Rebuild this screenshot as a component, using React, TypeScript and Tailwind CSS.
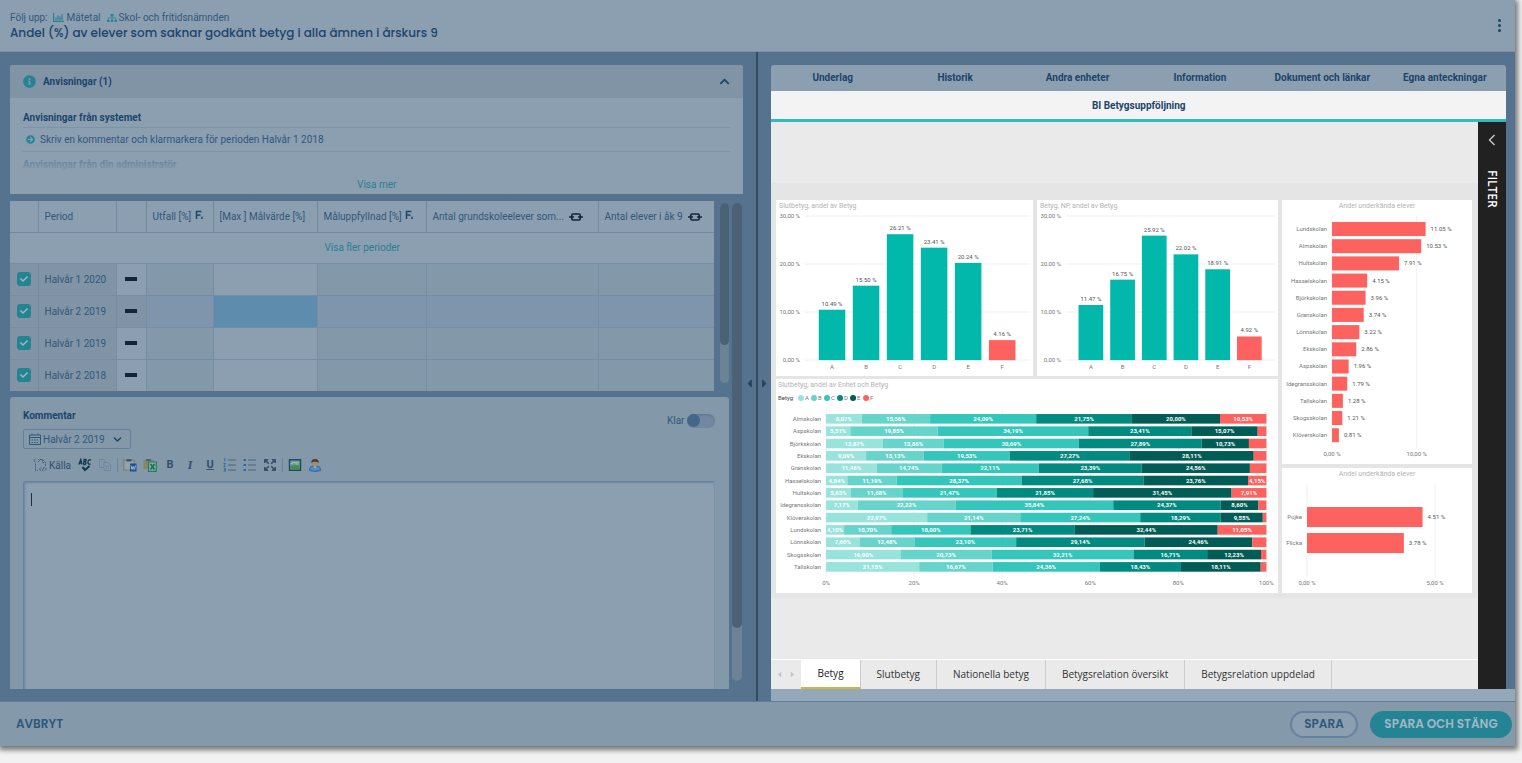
import { ReactNode } from "react";
import {
  FaCheck,
  FaChevronDown,
  FaChevronUp,
  FaInfoCircle,
  FaArrowCircleRight,
  FaSitemap,
  FaCaretLeft,
  FaCaretRight,
} from "react-icons/fa";

const TEAL = "#01b8aa";
const RED = "#fd625e";
const GRADE_COLORS = ["#99e3dd", "#67d4cc", "#34c6bb", "#018a80", "#015c55", RED];
const GRADES = ["A", "B", "C", "D", "E", "F"];

const FINAL_GRADES = [10.49, 15.5, 26.21, 23.41, 20.24, 4.16];
const TEST_GRADES = [11.47, 16.75, 25.92, 22.02, 18.91, 4.92];

interface NamedValue {
  name: string;
  value: number;
}

const FAILED_BY_SCHOOL: NamedValue[] = [
  { name: "Lundskolan", value: 11.05 },
  { name: "Almskolan", value: 10.53 },
  { name: "Hultskolan", value: 7.91 },
  { name: "Hasselskolan", value: 4.15 },
  { name: "Björkskolan", value: 3.96 },
  { name: "Granskolan", value: 3.74 },
  { name: "Lönnskolan", value: 3.22 },
  { name: "Ekskolan", value: 2.86 },
  { name: "Aspskolan", value: 1.96 },
  { name: "Idegransskolan", value: 1.79 },
  { name: "Tallskolan", value: 1.28 },
  { name: "Skogsskolan", value: 1.21 },
  { name: "Klöverskolan", value: 0.81 },
];

const FAILED_BY_GENDER: NamedValue[] = [
  { name: "Pojke", value: 4.51 },
  { name: "Flicka", value: 3.78 },
];

const GRADES_BY_SCHOOL = [
  { name: "Almskolan", values: [8.07, 15.56, 24.09, 21.75, 20.0, 10.53] },
  { name: "Aspskolan", values: [5.51, 19.85, 34.19, 23.41, 15.07, 1.97] },
  { name: "Björkskolan", values: [12.87, 13.86, 30.69, 27.89, 10.73, 3.96] },
  { name: "Ekskolan", values: [9.09, 13.13, 19.53, 27.27, 28.11, 2.87] },
  { name: "Granskolan", values: [11.46, 14.74, 22.11, 23.39, 24.56, 3.74] },
  { name: "Hasselskolan", values: [4.84, 11.19, 28.37, 27.68, 23.76, 4.15] },
  { name: "Hultskolan", values: [5.65, 11.68, 21.47, 21.85, 31.45, 7.91] },
  { name: "Idegransskolan", values: [7.17, 22.22, 35.84, 24.37, 8.6, 1.79] },
  { name: "Klöverskolan", values: [22.97, 21.14, 27.24, 18.29, 9.55, 0.81] },
  { name: "Lundskolan", values: [4.1, 10.7, 18.0, 23.71, 32.44, 11.05] },
  { name: "Lönnskolan", values: [7.6, 12.48, 23.1, 29.14, 24.46, 3.22] },
  { name: "Skogsskolan", values: [16.9, 20.73, 32.21, 16.71, 12.23, 1.21] },
  { name: "Tallskolan", values: [21.15, 16.67, 24.36, 18.43, 18.11, 1.28] },
];

const comma = (n: number) => n.toFixed(2).replace(".", ",");

interface ChartFrameProps {
  width: number;
  height: number;
  label: string;
  children: ReactNode;
}
function ChartFrame({ width, height, label, children }: ChartFrameProps) {
  return (
    <svg
      viewBox={`0 0 ${width} ${height}`}
      role="img"
      aria-label={label}
      className="block w-full bg-white font-['Roboto',sans-serif] text-[6px]"
      fill="#777777"
    >
      {children}
    </svg>
  );
}

interface ColumnChartProps {
  title: string;
  values: number[];
  width: number;
  bandStart: number;
  bandEnd: number;
}
function ColumnChart({ title, values, width, bandStart, bandEnd }: ColumnChartProps) {
  const base = 160;
  const scale = 4.8;
  const step = (bandEnd - bandStart) / values.length;
  return (
    <ChartFrame width={width} height={176} label={title}>
      <text x={3} y={8} fontSize={7} fill="#b3b3b3">
        {title}
      </text>
      {[0, 10, 20, 30].map((tick) => (
        <g key={tick}>
          <line x1={29} x2={width - 2} y1={base - tick * scale} y2={base - tick * scale} stroke="#efefef" />
          <text x={24} y={base + 2 - tick * scale} textAnchor="end">
            {comma(tick)} %
          </text>
        </g>
      ))}
      {values.map((value, i) => {
        const center = bandStart + step * (i + 0.5);
        return (
          <g key={GRADES[i]} textAnchor="middle">
            <rect
              x={center - step * 0.39}
              y={base - value * scale}
              width={step * 0.78}
              height={value * scale}
              fill={GRADES[i] === "F" ? RED : TEAL}
            />
            <text x={center} y={base - 4 - value * scale} fill="#555555">
              {value.toFixed(2)} %
            </text>
            <text x={center} y={base + 9}>
              {GRADES[i]}
            </text>
          </g>
        );
      })}
    </ChartFrame>
  );
}

interface BarChartProps {
  title: string;
  rows: NamedValue[];
  height: number;
  left: number;
  top: number;
  step: number;
  barHeight: number;
  scale: number;
  maxTick: number;
}
function BarChart({ title, rows, height, left, top, step, barHeight, scale, maxTick }: BarChartProps) {
  return (
    <ChartFrame width={190} height={height} label={title}>
      <text x={95} y={8} fontSize={7} fill="#b3b3b3" textAnchor="middle">
        {title}
      </text>
      {[0, maxTick].map((tick) => (
        <g key={tick}>
          <line x1={left + tick * scale} x2={left + tick * scale} y1={16} y2={height - 16} stroke="#efefef" />
          <text x={left + tick * scale} y={height - 8} textAnchor="middle">
            {comma(tick)} %
          </text>
        </g>
      ))}
      {rows.map((row, i) => {
        const y = top + i * step;
        const middle = y + barHeight / 2 + 2;
        return (
          <g key={row.name}>
            <text x={left - 5} y={middle} textAnchor="end">
              {row.name}
            </text>
            <rect x={left} y={y} width={row.value * scale} height={barHeight} fill={RED} />
            <text x={left + row.value * scale + 5} y={middle} fill="#555555">
              {row.value.toFixed(2)} %
            </text>
          </g>
        );
      })}
    </ChartFrame>
  );
}

function StackedChart() {
  const left = 50;
  const scale = 4.4;
  const top = 35;
  const step = 12.33;
  return (
    <ChartFrame width={501} height={214} label="Slutbetyg, andel av Enhet och Betyg">
      <text x={2} y={8} fontSize={7} fill="#b3b3b3">
        Slutbetyg, andel av Enhet och Betyg
      </text>
      <text x={2} y={21} fill="#444444">
        Betyg
      </text>
      {GRADES.map((grade, i) => (
        <g key={grade}>
          <circle cx={25 + i * 13} cy={19} r={3} fill={GRADE_COLORS[i]} />
          <text x={29 + i * 13} y={21}>
            {grade}
          </text>
        </g>
      ))}
      {[0, 20, 40, 60, 80, 100].map((tick) => (
        <g key={tick}>
          <line x1={left + tick * scale} x2={left + tick * scale} y1={30} y2={198} stroke="#efefef" />
          <text x={left + tick * scale} y={206} textAnchor="middle">
            {tick}%
          </text>
        </g>
      ))}
      {GRADES_BY_SCHOOL.map((school, row) => {
        const y = top + row * step;
        let sum = 0;
        return (
          <g key={school.name}>
            <text x={left - 5} y={y + 7} textAnchor="end">
              {school.name}
            </text>
            {school.values.map((value, i) => {
              const x = left + sum * scale;
              sum += value;
              return (
                <g key={GRADES[i]}>
                  <rect x={x} y={y} width={value * scale} height={9.6} fill={GRADE_COLORS[i]} />
                  {value >= 4 && (
                    <text x={x + (value * scale) / 2} y={y + 7} fill="#ffffff" fontWeight={700} textAnchor="middle">
                      {comma(value)}%
                    </text>
                  )}
                </g>
              );
            })}
          </g>
        );
      })}
    </ChartFrame>
  );
}

function MeasureIcon() {
  return (
    <svg viewBox="0 0 11 9" className="mr-[3px] ml-[5px] h-[9px] w-[11px]" fill="none" stroke="#248494">
      <path d="M.6 0V8.4H11" strokeWidth="1.2" />
      <path d="M3 7.200V4.500M5 7.200V2.500M7 7.200V3.500M9 7.200V1" strokeWidth="1.2" />
    </svg>
  );
}

function FunctionIcon() {
  return (
    <svg viewBox="0 0 9 10" className="mb-1 ml-px inline-block h-[10px] w-[9px]" fill="none" stroke="#1f4668">
      <path d="M1.5 9V1.5H6.5M1.5 5H5.5" strokeWidth="1.5" />
      <path d="M6 6.5L8 9M8 6.5L6 9" strokeWidth="0.8" />
    </svg>
  );
}

function LinkIcon() {
  return (
    <svg viewBox="0 0 14 10" className="ml-[3px] inline-block h-[10px] w-[14px]" fill="none" stroke="#10273b" strokeWidth="1.6">
      <path d="M5.5 2H4Q2.8 2 2.8 3.2V6.8Q2.8 8 4 8H5.5M8.5 2H10Q11.2 2 11.2 3.2V6.8Q11.2 8 10 8H8.5M5 2H9M5 8H9" />
      <path d="M0 5H5M9 5H14" />
    </svg>
  );
}

function SourceIcon() {
  return (
    <svg viewBox="0 0 14 14" className="size-[14px]" fill="none" stroke="#43607b">
      <path d="M2.5 1L.8 2.5L2.5 4M5 1L6.7 2.5L5 4" />
      <path d="M7 1.5H9.5L12.5 4.5V8M9.5 1.5V4.5H12.5M2.5 5.5V12.5H5" strokeDasharray="2 .8" />
      <path d="M8 9.5L6.3 11L8 12.5M12 9.5L13.5 11L12 12.5M10.7 9L9.4 13" />
    </svg>
  );
}

function SpellIcon() {
  return (
    <svg viewBox="0 0 14 14" className="size-[14px]" fill="none" stroke="#0f3a4c">
      <path d="M.8 6.5L2.8 1.5L4 6.5M1.5 5H4M5.5 6.5L6.2 1.5H7.8Q9 2.5 7 3.8Q9 5 7 6.5H5.5M13 2.2Q10.2.8 10 4Q9.9 7 12.6 6" strokeWidth="1.3" />
      <path d="M4.5 9L7 12L11.5 8" strokeWidth="2" />
    </svg>
  );
}

function CopyIcon() {
  return (
    <svg viewBox="0 0 14 14" className="size-[14px]" fill="#8399ab" stroke="#6e869b">
      <path d="M1.5 1.5H5.5L8 4V9.5H1.5Z" />
      <path d="M6 4.5H10L12.5 7V12.5H6ZM7.5 8H11M7.5 10H11" />
    </svg>
  );
}

function PasteWordIcon() {
  return (
    <svg viewBox="0 0 14 14" className="size-[14px]">
      <path d="M.8 2.2H11.2V12.2H.8Z" fill="#8fa4b6" stroke="#8b7f60" strokeWidth="1.3" />
      <path d="M3.5 3.5V1.2H8.5V3.5Z" fill="#37536c" />
      <path d="M7 5.5H13.5V13.5H7Z" fill="#1d5295" />
      <path d="M8 7.5L9 11.5L10.2 8.5L11.4 11.5L12.5 7.5" fill="none" stroke="#a9bccd" />
    </svg>
  );
}

function PasteExcelIcon() {
  return (
    <svg viewBox="0 0 14 14" className="size-[14px]">
      <path d="M.5 2H11V11H.5Z" fill="#8c8464" />
      <path d="M3 3V1H8V3Z" fill="#4c6478" />
      <path d="M5.5 4H13.3V13.3H5.5Z" fill="#8da8ae" stroke="#1f7f63" strokeWidth="1.2" />
      <path d="M7.5 6L11.5 11.5M11.5 6L7.5 11.5" stroke="#117a52" strokeWidth="1.7" />
    </svg>
  );
}

interface ListIconProps {
  numbered?: boolean;
}
function ListIcon({ numbered }: ListIconProps) {
  return (
    <svg viewBox="0 0 14 14" className="size-[14px]" fill="none">
      <path d="M5 2H13M5 7H13M5 12H13" stroke="#4a647d" />
      {numbered ? (
        <path d="M.8.8H1.8V3.5M.6 5.5H2.4L.8 8.2H2.5M.6 10H2.3V13.2H.6M1 11.6H2.2" stroke="#2f66a0" strokeWidth=".9" />
      ) : (
        <path d="M.5 2H3M.5 7H3M.5 12H3" stroke="#2f66a0" strokeWidth="2.2" />
      )}
    </svg>
  );
}

function MaximizeIcon() {
  return (
    <svg viewBox="0 0 14 14" className="size-[14px]" fill="#334f69" stroke="#334f69">
      <path d="M1.5 1.5H5L1.5 5ZM12.5 1.5V5L9 1.5ZM1.5 12.5V9L5 12.5ZM12.5 12.5H9L12.5 9Z" />
      <path d="M2 2L5.8 5.8M12 2L8.2 5.8M2 12L5.8 8.2M12 12L8.2 8.2" strokeWidth="1.6" />
    </svg>
  );
}

function ImageIcon() {
  return (
    <svg viewBox="0 0 14 14" className="size-[14px]">
      <path d="M1.5 1.8H12.5V12.2H1.5Z" fill="#5aa1b8" stroke="#204a5c" strokeWidth="1.4" />
      <path d="M2.2 11.5V8.5Q7 6 11.8 8V11.5Z" fill="#4c8a4d" />
      <path d="M2.5 6Q5 3.5 9 5" stroke="#b3c4c8" fill="none" />
      <circle cx="9" cy="5" r="1.6" fill="#c4a94c" />
    </svg>
  );
}

function UserIcon() {
  return (
    <svg viewBox="0 0 14 14" className="size-[14px]">
      <path d="M1.5 12.5Q1 8.5 4.5 8H9.5Q13 8.5 12.5 12.5Q7 14.5 1.5 12.5Z" fill="#4a90c8" stroke="#275c91" strokeWidth=".8" />
      <circle cx="7" cy="5" r="3.4" fill="#a68b72" />
      <path d="M3.3 5Q3 1 7 1Q11 1 10.7 5Q9 3.5 7 3.8Q5 3.5 3.3 5Z" fill="#4e3a35" />
      <path d="M5.5 8.5L7 10.5L8.5 8.5Z" fill="#a9bccb" />
    </svg>
  );
}

interface ToolProps {
  label: string;
  children: ReactNode;
}
function Tool({ label, children }: ToolProps) {
  return (
    <button type="button" aria-label={label} className="flex h-5 w-5 items-center justify-center text-[#334f69]">
      {children}
    </button>
  );
}

function PageHeader() {
  return (
    <header className="flex h-[52px] shrink-0 items-center justify-between border-b border-[#7990a5] bg-[#8b9fb1] px-[10px]">
      <div>
        <p className="flex items-center text-[10px] leading-[14px] text-[#31587b]">
          Följ upp:
          <MeasureIcon />
          Mätetal
          <FaSitemap className="mr-[2px] ml-[6px] text-[10px] text-[#248494]" />
          Skol- och fritidsnämnden
        </p>
        <h1 className="font-['Poppins','Inter',sans-serif] text-[12px] leading-4 font-medium text-[#1b456b]">
          Andel (%) av elever som saknar godkänt betyg i alla ämnen i årskurs 9
        </h1>
      </div>
      <button type="button" aria-label="Meny" className="flex w-3 flex-col items-center gap-[2px]">
        <span className="size-[3px] rounded-full bg-[#1b456b]" />
        <span className="size-[3px] rounded-full bg-[#1b456b]" />
        <span className="size-[3px] rounded-full bg-[#1b456b]" />
      </button>
    </header>
  );
}

function Instructions() {
  return (
    <section className="mr-[13px] rounded-[3px] bg-[#8b9fb1]">
      <div className="flex h-[33px] items-center rounded-t-[3px] bg-[#8094a6] px-[13px]">
        <FaInfoCircle className="text-[13px] text-[#248494]" />
        <h2 className="ml-[7px] flex-1 text-[10px] font-bold">Anvisningar (1)</h2>
        <button type="button" aria-label="Dölj anvisningar">
          <FaChevronUp className="text-[11px]" />
        </button>
      </div>
      <div className="relative h-24 px-[13px] pt-[13px]">
        <h3 className="border-b border-[#7d93a6] pb-[2px] text-[10px] leading-[14px] font-bold">
          Anvisningar från systemet
        </h3>
        <p className="flex h-6 items-center border-b border-[#7d93a6] pl-[3px] text-[10px] text-[#31587b]">
          <FaArrowCircleRight className="mr-[5px] text-[9px] text-[#248494]" />
          Skriv en kommentar och klarmarkera för perioden Halvår 1 2018
        </p>
        <h3 className="pt-[6px] text-[10px] leading-[14px] font-bold text-[#5c7a99]">Anvisningar från din administratör</h3>
        <div className="absolute inset-x-0 bottom-0 flex h-9 items-end justify-center bg-linear-to-t from-[#8b9fb1] from-60% to-transparent pb-[2px]">
          <button type="button" className="text-[10px] leading-[14px] text-[#267f93]">
            Visa mer
          </button>
        </div>
      </div>
    </section>
  );
}

const PERIODS = ["Halvår 1 2020", "Halvår 2 2019", "Halvår 1 2019", "Halvår 2 2018"];

function PeriodTable() {
  return (
    <table className="w-full table-fixed border-collapse bg-[#8b9fb1] text-[10px] whitespace-nowrap text-[#31587b]">
      <colgroup>
        <col className="w-[28px]" />
        <col className="w-[78px]" />
        <col className="w-[30px]" />
        <col className="w-[67px]" />
        <col className="w-[104px]" />
        <col className="w-[109px]" />
        <col className="w-[172px]" />
        <col />
      </colgroup>
      <thead>
        <tr className="h-[31px] border-b border-[#7088a0] text-left *:border-r *:border-[#7088a0] *:px-[6px] *:py-0 *:font-normal *:last:border-r-0">
          <th aria-label="Vald" />
          <th>Period</th>
          <th aria-label="Trend" />
          <th>
            Utfall [%] <FunctionIcon />
          </th>
          <th>[Max ] Målvärde [%]</th>
          <th>
            Måluppfyllnad [%] <FunctionIcon />
          </th>
          <th>
            Antal grundskoleelever som... <LinkIcon />
          </th>
          <th>
            Antal elever i åk 9 <LinkIcon />
          </th>
        </tr>
      </thead>
      <tbody>
        <tr className="h-[31px] border-b border-[#768da3]">
          <td colSpan={8} className="p-0 text-center">
            <button type="button" className="text-[#267f93]">
              Visa fler perioder
            </button>
          </td>
        </tr>
        {PERIODS.map((period) => {
          const active = period === "Halvår 2 2019";
          const cell = active ? "bg-[#7f95ab]" : "bg-[#8398a9]";
          return (
            <tr
              key={period}
              className="h-8 border-b border-[#768da3] *:border-r *:border-[#768da3] *:p-0 last:border-b-0 *:last:border-r-0"
            >
              <td className="bg-[#8094a5]">
                <label className="relative mx-auto flex size-[14px] items-center justify-center">
                  <input
                    type="checkbox"
                    defaultChecked
                    aria-label={period}
                    className="size-[14px] appearance-none rounded-[3px] bg-[#248494]"
                  />
                  <FaCheck className="pointer-events-none absolute text-[8px] text-[#9db4c3]" />
                </label>
              </td>
              <td className="bg-[#8094a5]">
                <span className="pl-[6px]">{period}</span>
              </td>
              <td className={active ? "bg-[#8094a5]" : ""}>
                <div className="mx-auto h-1 w-3 bg-[#10273b]" />
              </td>
              <td className={cell} />
              <td className={active ? "bg-[#5e8cac]" : ""} />
              <td className={cell} />
              <td className={cell} />
              <td className={cell} />
            </tr>
          );
        })}
      </tbody>
    </table>
  );
}

function CommentCard() {
  return (
    <section className="flex min-h-0 flex-1 flex-col rounded-t-[3px] bg-[#8398a9] pr-[14px] pl-[13px]">
      <div className="flex items-start justify-between pt-3 pb-px">
        <h2 className="text-[10px] leading-[14px] font-bold">Kommentar</h2>
        <label className="mt-[5px] flex items-center gap-[3px] text-[10px] leading-[14px] text-[#31587b]">
          Klar
          <input
            type="checkbox"
            role="switch"
            className="h-[14px] w-7 appearance-none rounded-full bg-[#7288a0] shadow-[inset_0_1px_2px_#5a7590] before:block before:size-[13px] before:rounded-full before:bg-[#42678a]"
          />
        </label>
      </div>
      <div className="relative flex w-[108px] items-center text-[#31587b]">
        <svg viewBox="0 0 12 12" className="pointer-events-none absolute left-[6px] size-3" fill="none" stroke="#31587b">
          <path d="M.5 2H11.5V11.5H.5ZM.5 4.5H11.5M3 .5V2M9 .5V2" />
          <path d="M2.5 7H10M2.5 9.5H10" strokeDasharray="1.5 1" strokeWidth="1.2" />
        </svg>
        <select
          aria-label="Period"
          className="h-5 w-full appearance-none rounded-[2px] border border-[#657f98] bg-[#8398a9] pl-[19px] text-[10px]"
        >
          <option>Halvår 2 2019</option>
        </select>
        <FaChevronDown className="pointer-events-none absolute right-[9px] text-[9px] text-[#1b456b]" />
      </div>
      <div className="flex h-8 items-center pl-[10px]">
        <button type="button" className="mr-1 flex items-center gap-[2px] text-[10px] text-[#334f69]">
          <SourceIcon />
          Källa
        </button>
        <Tool label="Stavningskontroll">
          <SpellIcon />
        </Tool>
        <Tool label="Kopiera">
          <CopyIcon />
        </Tool>
        <span className="mr-[2px] ml-[2px] h-[14px] w-px bg-[#6f879c]" />
        <Tool label="Klistra in från Word">
          <PasteWordIcon />
        </Tool>
        <Tool label="Klistra in från Excel">
          <PasteExcelIcon />
        </Tool>
        <Tool label="Fet">
          <b className="text-[11px]">B</b>
        </Tool>
        <Tool label="Kursiv">
          <i className="font-['Liberation_Serif',serif] text-xs font-bold">I</i>
        </Tool>
        <Tool label="Understruken">
          <span className="text-[11px] font-bold underline">U</span>
        </Tool>
        <Tool label="Numrerad lista">
          <ListIcon numbered />
        </Tool>
        <Tool label="Punktlista">
          <ListIcon />
        </Tool>
        <Tool label="Maximera">
          <MaximizeIcon />
        </Tool>
        <span className="mr-[2px] ml-[2px] h-[14px] w-px bg-[#6f879c]" />
        <Tool label="Bild">
          <ImageIcon />
        </Tool>
        <Tool label="Användare">
          <UserIcon />
        </Tool>
      </div>
      <div className="relative flex min-h-0 flex-1">
        <textarea
          aria-label="Kommentar"
          className="w-full resize-none rounded-t-[3px] border border-b-0 border-[#67819b] border-r-[#7b91a6] bg-[#8b9fb1] p-2 text-xs shadow-[inset_1px_1px_2px_#6f879c]"
        />
        <span className="absolute top-3 left-2 h-[13px] w-px bg-[#1b3047]" />
      </div>
    </section>
  );
}

const PANEL_TABS = ["Underlag", "Historik", "Andra enheter", "Information", "Dokument och länkar", "Egna anteckningar"];
const REPORT_TABS = ["Betyg", "Slutbetyg", "Nationella betyg", "Betygsrelation översikt", "Betygsrelation uppdelad"];

function Report() {
  return (
    <div className="flex min-h-0 flex-1 bg-[#eaeaea]">
      <div className="flex min-w-0 flex-1 flex-col">
        <div className="flex min-h-0 flex-1 flex-col justify-center">
          <div className="flex gap-1 bg-[#e5e5e5] pt-[17px] pr-[6px] pb-[5px] pl-[5px]">
            <div className="flex min-w-0 flex-[501] flex-col gap-[3px]">
              <div className="flex gap-1">
                <div className="min-w-0 flex-[256]">
                  <ColumnChart title="Slutbetyg, andel av Betyg" values={FINAL_GRADES} width={256} bandStart={39} bandEnd={243} />
                </div>
                <div className="min-w-0 flex-[241]">
                  <ColumnChart title="Betyg, NP, andel av Betyg" values={TEST_GRADES} width={241} bandStart={38} bandEnd={228} />
                </div>
              </div>
              <StackedChart />
            </div>
            <div className="flex min-w-0 flex-[190] flex-col gap-1">
              <BarChart
                title="Andel underkända elever"
                rows={FAILED_BY_SCHOOL}
                height={264}
                left={50}
                top={22}
                step={17.17}
                barHeight={14}
                scale={8.46}
                maxTick={10}
              />
              <BarChart
                title="Andel underkända elever"
                rows={FAILED_BY_GENDER}
                height={125}
                left={25}
                top={39}
                step={26}
                barHeight={20}
                scale={25.6}
                maxTick={5}
              />
            </div>
          </div>
        </div>
        <nav className="flex h-[30px] shrink-0 border-t border-white font-['Open_Sans',sans-serif] text-[10px] text-[#333333]">
          <div className="flex w-[30px] items-center justify-between px-1 text-[9px] text-[#c4c4c4]">
            <FaCaretLeft />
            <FaCaretRight />
          </div>
          {REPORT_TABS.map((tab, i) => (
            <button
              type="button"
              key={tab}
              className={
                i === 0
                  ? "border-r border-b-2 border-r-[#cccccc] border-b-[#cdb83c] bg-white px-4 text-[#222222]"
                  : "border-r border-[#cccccc] px-4"
              }
            >
              {tab}
            </button>
          ))}
        </nav>
      </div>
      <aside className="flex w-7 shrink-0 flex-col items-center bg-[#212121] pt-3 text-white">
        <button type="button" aria-label="Visa filter">
          <svg viewBox="0 0 8 12" className="h-3 w-2" fill="none" stroke="#d5d5d5" strokeWidth="1.2">
            <path d="M6.5 1L1.5 6L6.5 11" />
          </svg>
        </button>
        <span className="mt-6 font-['Open_Sans',sans-serif] text-xs font-semibold [writing-mode:vertical-rl]">FILTER</span>
      </aside>
    </div>
  );
}

export default function App() {
  return (
    <div className="h-screen bg-[#f2f2f2] pr-[7px] pb-[17px] font-['Roboto',sans-serif]">
      <div className="flex h-full flex-col bg-[#55738e] text-[#1b456b] shadow-[1px_2px_5px_2px_#777777]">
        <PageHeader />
        <main className="flex min-h-0 flex-1">
          <div className="flex min-w-0 flex-[758] flex-col gap-[7px] pt-[13px] pb-3 pl-[10px]">
            <Instructions />
            <div className="mr-[14px] flex min-h-0 flex-1 gap-[3px]">
              <div className="flex min-w-0 flex-1 flex-col gap-[6px]">
                <div className="flex gap-[6px]">
                  <div className="min-w-0 flex-1">
                    <PeriodTable />
                  </div>
                  <div className="my-[2px] mb-2 w-[9px] rounded-full bg-[#6b8297]">
                    <div className="h-[142px] rounded-full bg-[#4b6276]" />
                  </div>
                </div>
                <CommentCard />
              </div>
              <div className="mt-[2px] mb-2 w-[10px] rounded-full bg-[#6b8297]">
                <div className="h-[89%] rounded-full bg-[#4b6276]" />
              </div>
            </div>
          </div>
          <div className="relative w-[2px] bg-[#344b60]">
            <FaCaretLeft className="absolute top-1/2 right-full text-[13px] text-[#2b4359]" />
            <FaCaretRight className="absolute top-1/2 left-full text-[13px] text-[#2b4359]" />
          </div>
          <div className="flex min-w-0 flex-[755] flex-col pt-[13px] pl-[13px]">
            <div className="mr-[9px] flex min-h-0 flex-1 flex-col">
              <nav className="grid h-[26px] shrink-0 grid-cols-6 rounded-t-[3px] bg-[#8b9fb1] text-[10px] font-bold">
                {PANEL_TABS.map((tab) => (
                  <button type="button" key={tab} className="pb-px whitespace-nowrap">
                    {tab}
                  </button>
                ))}
              </nav>
              <button
                type="button"
                className="h-[31px] shrink-0 border-b-[3px] border-[#2dbdbd] bg-[#f3f3f3] text-[10px] font-bold"
              >
                BI Betygsuppföljning
              </button>
              <Report />
            </div>
            <div className="h-3 shrink-0 bg-[#95a8b9]" />
          </div>
        </main>
        <footer className="flex h-[45px] shrink-0 items-center gap-3 border-t border-[#5f7d99] bg-[#849aab] pr-[3px] pl-4 font-['Poppins','Inter',sans-serif] text-[12px] font-semibold">
          <button type="button" className="mr-auto text-[#31587b]">
            AVBRYT
          </button>
          <button type="button" className="h-[27px] w-[68px] rounded-full border-2 border-[#67819d] bg-[#8b9fb1] text-[#31587b]">
            SPARA
          </button>
          <button type="button" className="h-[27px] w-[142px] rounded-full bg-[#248494] text-[#a0b8c6]">
            SPARA OCH STÄNG
          </button>
        </footer>
      </div>
    </div>
  );
}
